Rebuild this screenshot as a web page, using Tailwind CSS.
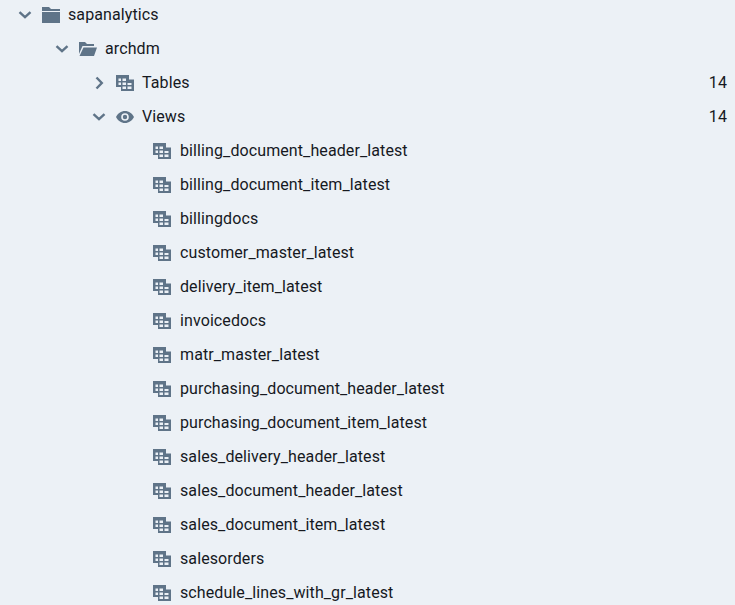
<!DOCTYPE html>
<html lang="en">
<head>
  <meta charset="UTF-8">
  <title>Schema tree</title>
  <script src="https://cdn.jsdelivr.net/npm/@tailwindcss/browser@4"></script>
</head>
<body class="h-[605px] overflow-hidden bg-[#ecf1f6] font-['Roboto',sans-serif] text-[16px] tracking-[0.1px] text-[#16191f]">
  <svg width="0" height="0" class="absolute">
    <defs>
      <symbol id="down" viewBox="0 0 14 14"><path d="M1.500 4.200 7 9.200l5.500-5" fill="none" stroke="#5f7488" stroke-width="2.400"/></symbol>
      <symbol id="right" viewBox="0 0 14 14"><path d="M4.500 1.500 9.800 7l-5.300 5.500" fill="none" stroke="#5f7488" stroke-width="2.400"/></symbol>
      <symbol id="table" viewBox="0 0 18 16"><path fill-rule="evenodd" fill="#5f7488" d="M0 0h13v4.500h5V16H5v-4H0zM2.500 3.500V6H5V3.500zm4 0V6H10V3.500zM2.500 7.500V10H5V7.500zm4 0V10H10V7.500zm5 .500V10H15.500V8zm-5 3.500V14H10v-2.500zm5 0V14H15.500v-2.500z"/></symbol>
    </defs>
  </svg>

  <div class="-mt-[2px]">
    <!-- Database -->
    <div class="flex h-[34px] items-center pl-[18px]">
      <svg class="h-[14px] w-[14px]"><use href="#down"/></svg>
      <svg class="ml-[10px] h-[16px] w-[18px]" viewBox="0 0 18 16"><path fill="#5f7488" d="M0 0h7l2 2h9v2H0zM0 5h18v11H0z"/></svg>
      <span class="ml-[8px]">sapanalytics</span>
    </div>

    <!-- Schema -->
    <div class="flex h-[34px] items-center pl-[55px]">
      <svg class="h-[14px] w-[14px]"><use href="#down"/></svg>
      <svg class="ml-[10px] h-[16px] w-[18px]" viewBox="0 0 18 16"><path fill="#5f7488" d="M0 1h6l2 2h7v2H3.500L0 13zM4.500 6.500H18L15 15H0.500z"/></svg>
      <span class="ml-[8px]">archdm</span>
    </div>

    <!-- Tables -->
    <div class="flex h-[34px] items-center pl-[92px] pr-[8px]">
      <svg class="h-[14px] w-[14px]"><use href="#right"/></svg>
      <svg class="ml-[10px] h-[16px] w-[18px]"><use href="#table"/></svg>
      <span class="ml-[8px]">Tables</span>
      <span class="ml-auto">14</span>
    </div>

    <!-- Views -->
    <div class="flex h-[34px] items-center pl-[92px] pr-[8px]">
      <svg class="h-[14px] w-[14px]"><use href="#down"/></svg>
      <svg class="ml-[10px] h-[12px] w-[18px]" viewBox="0 0 18 12"><path fill-rule="evenodd" fill="#5f7488" d="M9 0c4 0 7.200 2.500 9 6-1.800 3.500-5 6-9 6s-7.200-2.500-9-6c1.800-3.500 5-6 9-6zm0 2.200a3.800 3.800 0 1 0 0 7.600 3.800 3.800 0 0 0 0-7.600zm0 1.600a2.200 2.200 0 1 1 0 4.400 2.200 2.200 0 0 1 0-4.400z"/></svg>
      <span class="ml-[8px]">Views</span>
      <span class="ml-auto">14</span>
    </div>

    <!-- View list -->
    <ul class="pl-[153px]">
      <li class="flex h-[34px] items-center gap-[9px]"><svg class="h-[16px] w-[18px]"><use href="#table"/></svg>billing_document_header_latest</li>
      <li class="flex h-[34px] items-center gap-[9px]"><svg class="h-[16px] w-[18px]"><use href="#table"/></svg>billing_document_item_latest</li>
      <li class="flex h-[34px] items-center gap-[9px]"><svg class="h-[16px] w-[18px]"><use href="#table"/></svg>billingdocs</li>
      <li class="flex h-[34px] items-center gap-[9px]"><svg class="h-[16px] w-[18px]"><use href="#table"/></svg>customer_master_latest</li>
      <li class="flex h-[34px] items-center gap-[9px]"><svg class="h-[16px] w-[18px]"><use href="#table"/></svg>delivery_item_latest</li>
      <li class="flex h-[34px] items-center gap-[9px]"><svg class="h-[16px] w-[18px]"><use href="#table"/></svg>invoicedocs</li>
      <li class="flex h-[34px] items-center gap-[9px]"><svg class="h-[16px] w-[18px]"><use href="#table"/></svg>matr_master_latest</li>
      <li class="flex h-[34px] items-center gap-[9px]"><svg class="h-[16px] w-[18px]"><use href="#table"/></svg>purchasing_document_header_latest</li>
      <li class="flex h-[34px] items-center gap-[9px]"><svg class="h-[16px] w-[18px]"><use href="#table"/></svg>purchasing_document_item_latest</li>
      <li class="flex h-[34px] items-center gap-[9px]"><svg class="h-[16px] w-[18px]"><use href="#table"/></svg>sales_delivery_header_latest</li>
      <li class="flex h-[34px] items-center gap-[9px]"><svg class="h-[16px] w-[18px]"><use href="#table"/></svg>sales_document_header_latest</li>
      <li class="flex h-[34px] items-center gap-[9px]"><svg class="h-[16px] w-[18px]"><use href="#table"/></svg>sales_document_item_latest</li>
      <li class="flex h-[34px] items-center gap-[9px]"><svg class="h-[16px] w-[18px]"><use href="#table"/></svg>salesorders</li>
      <li class="flex h-[34px] items-center gap-[9px]"><svg class="h-[16px] w-[18px]"><use href="#table"/></svg>schedule_lines_with_gr_latest</li>
    </ul>
  </div>
</body>
</html>
